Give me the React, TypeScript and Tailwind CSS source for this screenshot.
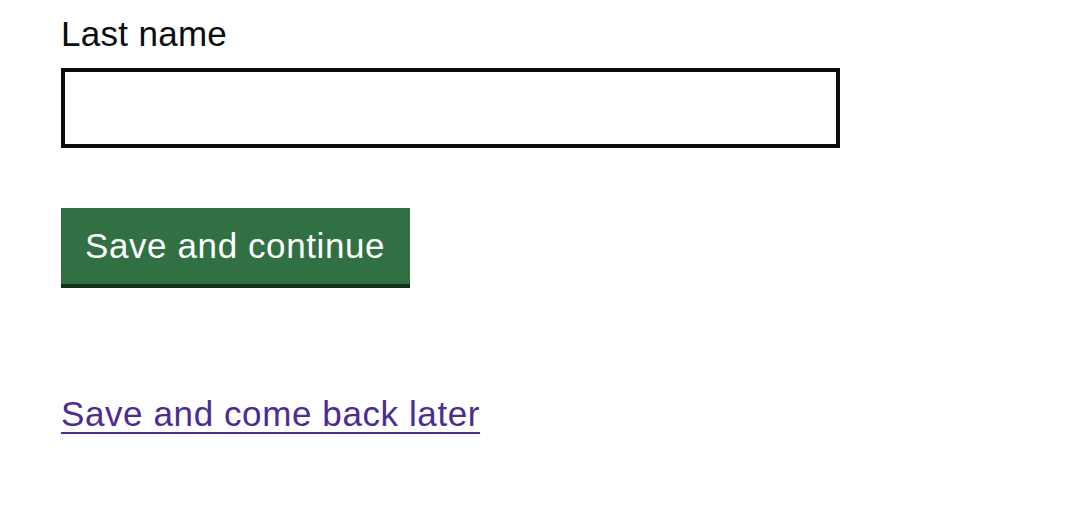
import React from 'react';

export default function App() {
  return (
    <div className="min-h-[508px] w-full bg-white font-['Liberation_Sans',Arial,sans-serif] text-[#0b0c0c]">
      <div className="pl-[61px] pt-[14px]">
        <label htmlFor="last-name" className="block text-[35px] leading-[40px] tracking-[0.3px] mb-[14px]">
          Last name
        </label>
        <input
          id="last-name"
          type="text"
          className="block h-[80px] w-[779px] border-4 border-[#0b0c0c] bg-white px-3 text-[35px] outline-none"
        />

        <button
          type="button"
          className="mt-[60px] block h-[80px] border-b-4 border-[#14301b] bg-[#307042] pl-[24px] pr-[25px] text-[35px] leading-[76px] tracking-[0.6px] text-white"
        >
          Save and continue
        </button>

        <a
          href="#"
          className="mt-[106px] inline-block text-[35px] leading-[40px] tracking-[0.6px] text-[#4c2c92] underline decoration-[2px] underline-offset-[6px]"
        >
          Save and come back later
        </a>
      </div>
    </div>
  );
}
